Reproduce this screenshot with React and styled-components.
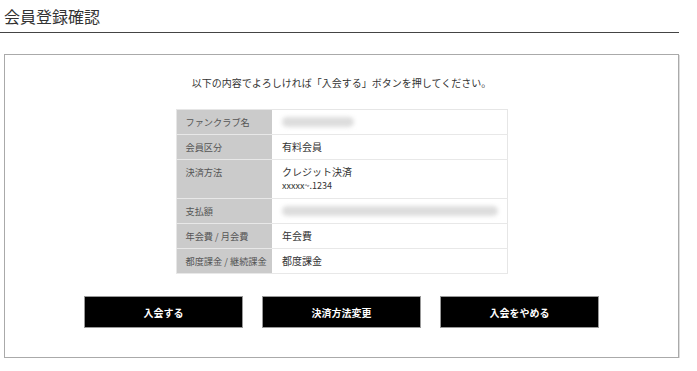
import styled, { createGlobalStyle } from 'styled-components';

const GlobalStyle = createGlobalStyle`
  body {
    margin: 0;
    background: #fff;
    font-family: "Noto Sans CJK JP", "Noto Sans", sans-serif;
    color: #333;
  }
`;

const Page = styled.div`
  width: 675px;
  padding: 0 0 0 4px;
`;

const Title = styled.h1`
  margin: 0 0 0 -4px;
  padding: 6px 0 6px 4px;
  font-size: 16px;
  font-weight: 400;
  line-height: 20px;
  color: #333;
  border-bottom: 1px solid #444;
`;

const Box = styled.div`
  margin-top: 21px;
  height: 304px;
  box-sizing: border-box;
  border: 1px solid #aaa;
  box-shadow: 1px 1px 0 #ddd;
  display: flex;
  flex-direction: column;
  align-items: center;
  padding-top: 21px;
`;

const Lead = styled.p`
  margin: 0;
  font-size: 10px;
  line-height: 14px;
  color: #333;
`;

const Table = styled.table`
  margin-top: 19px;
  width: 332px;
  table-layout: fixed;
  border-collapse: collapse;
  border: 1px solid #e6e6e6;
  font-size: 10px;
`;

const Head = styled.th`
  width: 96px;
  box-sizing: border-box;
  text-align: left;
  vertical-align: top;
  font-weight: 400;
  font-size: 9.2px;
  color: #555;
  background: #cbcbcb;
  padding: 5px 0 5px 9px;
  line-height: 14px;
  border-bottom: 1px solid #e8e8e8;
  white-space: nowrap;
  overflow: hidden;
`;

const Cell = styled.td`
  padding: 5px 10px;
  line-height: 14px;
  color: #333;
  border-bottom: 1px solid #e8e8e8;
  vertical-align: top;
`;

const Small = styled.div`
  font-size: 9px;
`;

const Blur = styled.div`
  width: ${p => p.$w}px;
  height: 10px;
  margin: 2px 0;
  border-radius: 5px;
  background: #ddd;
  filter: blur(2px);
`;

const Buttons = styled.div`
  margin-top: 22px;
  display: flex;
  gap: 19px;
`;

const Button = styled.button`
  width: 159px;
  height: 32px;
  background: #000;
  border: 1px solid #999;
  color: #fff;
  font-family: inherit;
  font-size: 10px;
  font-weight: 700;
  cursor: pointer;
`;

const rows = [
  ['ファンクラブ名', <Blur $w={72} />],
  ['会員区分', '有料会員'],
  ['決済方法', <>クレジット決済<Small>xxxxx~.1234</Small></>],
  ['支払額', <Blur $w={216} />],
  ['年会費 / 月会費', '年会費'],
  ['都度課金 / 継続課金', '都度課金'],
];

export default function App() {
  return (
    <Page>
      <GlobalStyle />
      <Title>会員登録確認</Title>
      <Box>
        <Lead>以下の内容でよろしければ「入会する」ボタンを押してください。</Lead>
        <Table>
          <tbody>
            {rows.map(([k, v]) => (
              <tr key={k}>
                <Head>{k}</Head>
                <Cell>{v}</Cell>
              </tr>
            ))}
          </tbody>
        </Table>
        <Buttons>
          <Button>入会する</Button>
          <Button>決済方法変更</Button>
          <Button>入会をやめる</Button>
        </Buttons>
      </Box>
    </Page>
  );
}
